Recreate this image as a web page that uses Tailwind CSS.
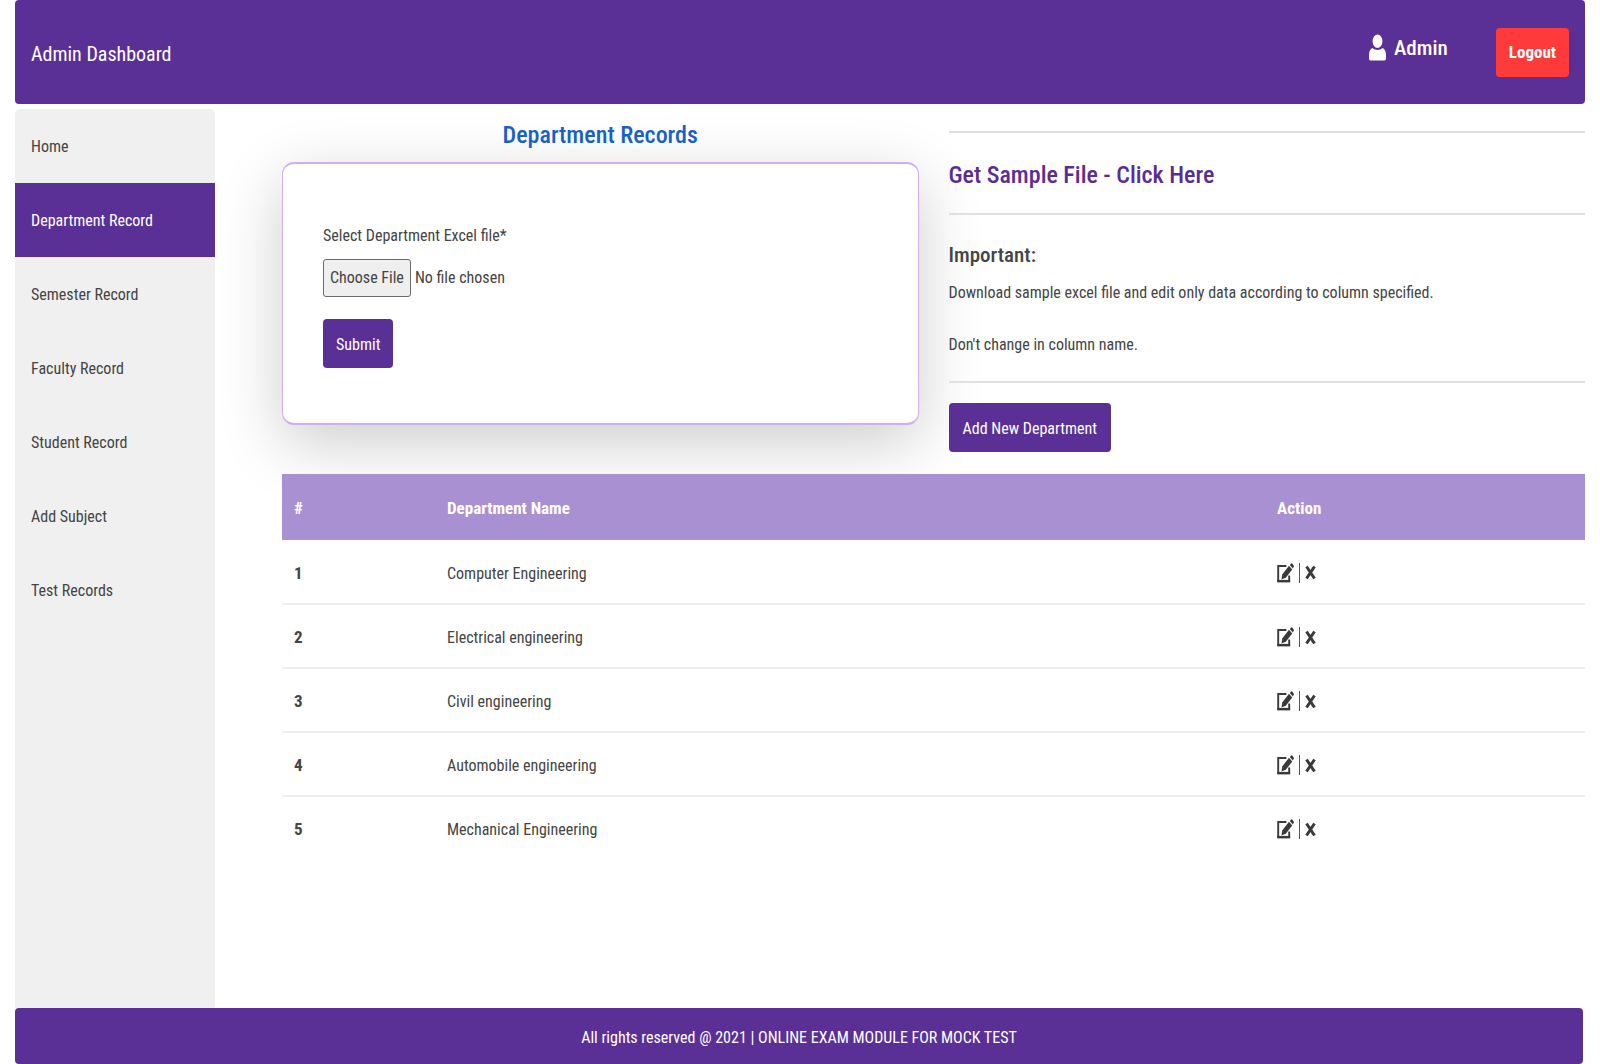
<!DOCTYPE html>
<html lang="en">
<head>
<meta charset="utf-8">
<meta name="viewport" content="width=device-width, initial-scale=1">
<title>Admin Dashboard</title>
<script src="https://cdn.jsdelivr.net/npm/@tailwindcss/browser@4"></script>
</head>
<body class="bg-white font-['Roboto_Condensed','Open_Sans',sans-serif] text-base text-[#444]">
<svg class="hidden">
  <symbol id="edit" viewBox="0 0 17 20" preserveAspectRatio="none">
    <path d="M9.4 3H1.2V18H12.2V12.5" fill="none" stroke="currentColor" stroke-width="1.9"/>
    <path d="M.3 16.9H13.1V19.4H.3z" fill="currentColor"/>
    <path d="M12 2.8 15.2 6.6 8.8 14.8 4.4 16.4 5.4 11.2z" fill="currentColor"/>
    <path d="M12.8 2 14 .6Q14.7 0 15.4.7L16.7 2.4Q17.2 3.2 16.6 4L15.8 5.6z" fill="currentColor"/>
  </symbol>
  <symbol id="remove" viewBox="0 0 11 15" preserveAspectRatio="none">
    <path d="M1.5 1.5 9.5 13.5M9.5 1.5 1.5 13.5" fill="none" stroke="currentColor" stroke-width="3"/>
  </symbol>
</svg>
<div class="flex min-h-screen flex-col px-[15px]">
  <header class="flex h-[104px] items-center rounded-[4px] bg-[#5a3096] px-4 text-white">
    <div class="pt-1 text-xl">Admin Dashboard</div>
    <div class="mb-1.5 ml-auto flex items-center gap-2 text-[21px] font-medium">
      <svg class="mb-1 h-[27px] w-[17px]" viewBox="0 0 17 27" fill="currentColor" aria-hidden="true"><ellipse cx="8.5" cy="7.2" rx="4.9" ry="6.8"/><path d="M3.2 14Q8.5 18 13.8 14Q17 16 17 21V24.5Q17 26.5 15.5 26.5H1.5Q0 26.5 0 24.5V21Q0 16 3.2 14z"/></svg>
      <span>Admin</span>
    </div>
    <button class="ml-12 h-[49px] rounded-[4px] bg-[#ff3a3a] px-[13px] pt-0.5 text-[17px] font-bold">Logout</button>
  </header>

  <div class="flex grow">
    <nav class="mt-[5px] w-[200px] shrink-0 rounded-t-[5px] bg-[#f0f0f0]">
      <a href="#" class="flex h-[74px] items-center px-4 pt-0.5">Home</a>
      <a href="#" class="flex h-[74px] items-center bg-[#5a3096] px-4 pt-0.5 text-white">Department Record</a>
      <a href="#" class="flex h-[74px] items-center px-4 pt-0.5">Semester Record</a>
      <a href="#" class="flex h-[74px] items-center px-4 pt-0.5">Faculty Record</a>
      <a href="#" class="flex h-[74px] items-center px-4 pt-0.5">Student Record</a>
      <a href="#" class="flex h-[74px] items-center px-4 pt-0.5">Add Subject</a>
      <a href="#" class="flex h-[74px] items-center px-4 pt-0.5">Test Records</a>
    </nav>

    <main class="ml-[67px] grow">
      <div class="grid h-[370px] grid-cols-2 gap-[30px]">
        <section>
          <h2 class="flex h-[58px] items-center justify-center pt-1 text-2xl font-medium text-[#175fc9]">Department Records</h2>
          <form class="h-[263px] rounded-xl border border-y-2 border-[#d1aeee] bg-white px-10 pt-[58px] shadow-[0_18px_64px_rgba(0,0,0,0.2)]">
            <label for="file" class="block h-[37px] leading-7">Select Department Excel file*</label>
            <input id="file" type="file" class="block h-[38px] w-full leading-[38px] file:h-[38px] file:rounded-[3px] file:border file:border-solid file:border-[#6b6b6b] file:bg-[#efefef] file:px-[6px] file:leading-9">
            <button type="button" class="mt-[22px] h-[49px] rounded-[4px] bg-[#5a3096] px-[13px] pt-0.5 text-white">Submit</button>
          </form>
        </section>
        <section class="relative pt-[27px]">
          <hr class="border-t-2 border-[#e0e0e0]">
          <h2 class="flex h-20 items-center pt-1 text-2xl font-medium text-[#5a2d96]"><a href="#">Get Sample File - Click Here</a></h2>
          <hr class="border-t-2 border-[#e0e0e0]">
          <h3 class="mt-6 text-[21px] font-medium leading-8">Important:</h3>
          <p class="mt-2.5 leading-6">Download sample excel file and edit only data according to column specified.</p>
          <p class="mt-7 leading-6">Don't change in column name.</p>
          <hr class="mt-6 border-t-2 border-[#e0e0e0]">
          <button class="mt-5 h-[49px] rounded-[4px] bg-[#5a3096] px-[14px] pt-0.5 text-white">Add New Department</button>
        </section>
      </div>
      <table class="relative w-full table-fixed border-collapse text-left">
        <thead>
          <tr class="h-[66px] bg-[#a990d3] text-[17px] text-white"><th class="w-[153px] px-3 pt-1">#</th><th class="px-3 pt-1">Department Name</th><th class="w-[320px] px-3 pt-1">Action</th></tr>
        </thead>
        <tbody id="rows"></tbody>
      </table>
    </main>
  </div>

  <footer class="mr-[2px] flex h-14 items-center justify-center rounded-[4px] bg-[#5a3096] pt-1 text-white">All rights reserved @ 2021 | ONLINE EXAM MODULE FOR MOCK TEST</footer>
</div>
<script>
const names = ["Computer Engineering", "Electrical engineering", "Civil engineering", "Automobile engineering", "Mechanical Engineering"];
document.getElementById("rows").innerHTML = names.map((name, i) => `
  <tr class="h-16 border-b-2 border-[#efefef] last:border-transparent">
    <th scope="row" class="px-3 pt-1 text-[17px]">${i + 1}</th>
    <td class="px-3 pt-1">${name}</td>
    <td class="px-3 pt-0.5"><div class="flex items-center text-[#3a3a3a]">
      <a href="#" aria-label="Edit ${name}"><svg class="h-5 w-[17px]"><use href="#edit"/></svg></a>
      <span class="mx-[5px] h-5 w-px bg-[#555]"></span>
      <a href="#" aria-label="Remove ${name}"><svg class="h-[15px] w-[11px]"><use href="#remove"/></svg></a>
    </div></td>
  </tr>`).join("");
</script>
</body>
</html>
